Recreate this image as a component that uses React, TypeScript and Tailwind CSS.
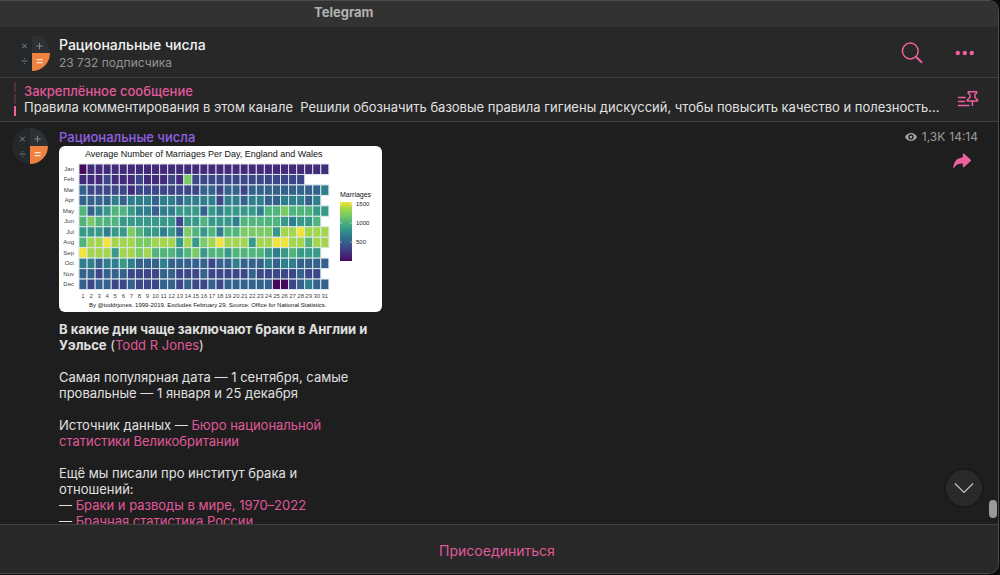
import React from 'react';

// Viridis steps, lowest to highest
const SCALE = ['#45085a', '#432a7a', '#3d4688', '#34628c', '#2f7e8c', '#379a88', '#4fb57b', '#7acb62', '#a3d64a', '#f2e438'];

// One digit per day, index into SCALE
const MONTHS = [
  { name: 'Jan', days: '0111111111111111111111111111111' },
  { name: 'Feb', days: '1112111211121722222222222222' },
  { name: 'Mar', days: '3222221222222223323323333333334' },
  { name: 'Apr', days: '333343444344344442443443344434' },
  { name: 'May', days: '6345665443445553545555466766655' },
  { name: 'Jun', days: '676665555555255655546666654556' },
  { name: 'Jul', days: '5554557655453765646677775889888' },
  { name: 'Aug', days: '6889888778885857898885889988688' },
  { name: 'Sep', days: '988858878666567566566665456555' },
  { name: 'Oct', days: '4434454333433333233433343443333' },
  { name: 'Nov', days: '332333222233222322222322222322' },
  { name: 'Dec', days: '3233223222332322323333330023433' },
];

const CELL_W = 8.06;
const CELL_H = 10.46;
const GRID_X = 20;
const GRID_Y = 18;

const LEGEND = [
  { label: '1500', y: 58 },
  { label: '1000', y: 77 },
  { label: '500', y: 96 },
];

const MarriagesChart: React.FC = () => (
  <svg viewBox="0 0 323 166" className="block w-full rounded-md bg-white" role="img" aria-label="Average Number of Marriages Per Day" fontFamily="'Liberation Sans', Arial, sans-serif">
    <defs>
      <linearGradient id="viridis" x1="0" y1="1" x2="0" y2="0">
        {SCALE.map((color, i) => (
          <stop key={color} offset={i / (SCALE.length - 1)} stopColor={color} />
        ))}
      </linearGradient>
    </defs>

    <text x="26" y="11" fontSize="9" fill="#111">Average Number of Marriages Per Day, England and Wales</text>

    {MONTHS.map((month, row) => (
      <g key={month.name}>
        <text x="15" y={GRID_Y + row * CELL_H + 7} fontSize="6" textAnchor="end" fill="#444">{month.name}</text>
        {month.days.split('').map((d, col) => (
          <rect
            key={col}
            x={GRID_X + col * CELL_W}
            y={GRID_Y + row * CELL_H}
            width={CELL_W}
            height={CELL_H}
            fill={SCALE[Number(d)]}
            stroke="#dbe6ea"
            strokeWidth="1"
          />
        ))}
      </g>
    ))}

    {Array.from({ length: 31 }, (_, i) => (
      <text key={i} x={GRID_X + (i + 0.5) * CELL_W} y="152" fontSize="6" textAnchor="middle" fill="#444">{i + 1}</text>
    ))}

    {/* LEGEND */}
    <text x="281" y="51" fontSize="7" fill="#111">Marriages</text>
    <rect x="281" y="56" width="12" height="59" fill="url(#viridis)" />
    {LEGEND.map(({ label, y }) => (
      <g key={label}>
        <path d={`M281 ${y}h2M291 ${y}h2`} stroke="#fff" strokeWidth="0.5" />
        <text x="297" y={y + 2} fontSize="6" fill="#222">{label}</text>
      </g>
    ))}

    <text x="30" y="161" fontSize="6" fill="#111">By @toddrjones. 1999-2019. Excludes February 29. Source: Office for National Statistics.</text>
  </svg>
);

const Avatar: React.FC = () => (
  <svg viewBox="0 0 36 36" className="block size-9 shrink-0" aria-hidden="true">
    <path d="M18 0A18 18 0 0 0 18 36Z" fill="#24282b" />
    <path d="M18 0A18 18 0 0 1 36 18H18Z" fill="#2d3134" />
    <path d="M18 18H36A18 18 0 0 1 18 36Z" fill="#f0823f" />
    <g stroke="#85888a" strokeWidth="1" fill="none">
      <path d="M8.2 8.7l4.6 4.6M12.8 8.7l-4.6 4.6" />
      <path d="M25.5 7.8v6.4M22.3 11h6.4" />
      <path d="M7.5 26h6" stroke="#6f7274" />
    </g>
    <circle cx="10.5" cy="23.6" r="0.7" fill="#6f7274" />
    <circle cx="10.5" cy="28.4" r="0.7" fill="#6f7274" />
    <path d="M22.6 24.6h6M22.6 27.6h6" stroke="#ffe6d4" strokeWidth="1.4" />
  </svg>
);

const SearchIcon: React.FC = () => (
  <svg viewBox="0 0 22 22" className="block size-[22px]" fill="none" stroke="#ee609f" strokeWidth="1.5" strokeLinecap="round">
    <circle cx="9.3" cy="9" r="7.9" />
    <path d="M15 14.8L20.6 20.2" strokeWidth="1.9" />
  </svg>
);

const PinListIcon: React.FC = () => (
  <svg viewBox="0 0 22 18" className="block h-[18px] w-[22px]" fill="none" stroke="#ee609f" strokeWidth="1.5" strokeLinecap="round" strokeLinejoin="round">
    <path d="M1.5 7.6h6.6M1.5 11.6h6M1.5 15.6h10.4" />
    <path d="M11.2 1.7h8.4v1.5l-1.7 1.3v3l2.6 2.2v1.4H10.3V9.7l2.6-2.2v-3l-1.7-1.3Z" />
    <path d="M15.4 11.4v4.2" />
  </svg>
);

const linkClass = 'text-[#e0589a]';

const App: React.FC = () => {
  return (
    <div className="h-screen bg-[#0c0c0c] pr-px pb-px font-['Inter','Noto_Sans',sans-serif] text-[#e0e0e0]">
      <div className="flex h-full flex-col overflow-hidden rounded-r-[10px] border-y border-r border-[#4b4b4b] bg-[#1e1e1e]">
        {/* TITLE BAR */}
        <div className="flex h-[26px] shrink-0 items-center bg-[#323232] pb-0.5 pl-[314px] text-[13px] font-bold text-[#b2b2b2]">
          Telegram
        </div>

        {/* CHAT HEADER */}
        <header className="flex h-[51px] shrink-0 items-center border-b border-[#414141] bg-[#282828] pt-0.5 pr-[23px] pl-3.5">
          <Avatar />
          <div className="ml-[9px] min-w-0 flex-1">
            <h1 className="truncate text-[14px] leading-[18px] font-medium text-[#f2f2f2]">Рациональные числа</h1>
            <p className="text-[12px] leading-[17px] text-[#949494]">23 732 подписчика</p>
          </div>
          <button type="button" aria-label="Поиск"><SearchIcon /></button>
          <button type="button" aria-label="Ещё" className="ml-8">
            <svg viewBox="0 0 20 6" className="block h-1.5 w-5" fill="#ee609f">
              <circle cx="2.8" cy="3" r="2.2" />
              <circle cx="9.8" cy="3" r="2.2" />
              <circle cx="16.8" cy="3" r="2.2" />
            </svg>
          </button>
        </header>

        {/* PINNED MESSAGE */}
        <section className="flex h-[44px] shrink-0 items-center border-b border-[#414141] bg-[#262626] pr-[19px] pb-px pl-3.5">
          <div className="flex flex-col gap-0.5">
            <span className="h-2.5 w-0.5 bg-[#54303f]" />
            <span className="h-2.5 w-0.5 bg-[#54303f]" />
            <span className="h-2.5 w-0.5 bg-[#f062a4]" />
          </div>
          <div className="ml-2 min-w-0 flex-1 text-[13px] leading-4">
            <p className="font-medium text-[#e0589a]">Закреплённое сообщение</p>
            <p className="truncate">
              Правила комментирования в этом канале{'\u00a0 '}Решили обозначить базовые правила гигиены дискуссий, чтобы повысить качество и полезность...
            </p>
          </div>
          <button type="button" aria-label="Закреплённые сообщения" className="ml-4"><PinListIcon /></button>
        </section>

        {/* MESSAGES */}
        <main className="relative min-h-0 flex-1 overflow-hidden">
          <article className="flex items-start pt-1.5 pr-5 pl-3">
            <Avatar />
            <div className="ml-[11px] w-[323px] shrink-0">
              <h2 className="pt-px text-[13px] leading-[17px] font-medium text-[#9160e6]">Рациональные числа</h2>
              <MarriagesChart />
              <div className="mt-[9px] text-[13px] leading-4">
                <p>
                  <b className="font-bold">В какие дни чаще заключают браки в Англии и<br />Уэльсе</b> (<a href="#todd" className={linkClass}>Todd R Jones</a>)
                </p>
                <p className="mt-4">Самая популярная дата — 1 сентября, самые<br />провальные — 1 января и 25 декабря</p>
                <p className="mt-4">
                  Источник данных — <a href="#ons" className={linkClass}>Бюро национальной<br />статистики Великобритании</a>
                </p>
                <p className="mt-4">
                  Ещё мы писали про институт брака и<br />отношений:<br />
                  — <a href="#world" className={linkClass}>Браки и разводы в мире, 1970–2022</a><br />
                  — <a href="#russia" className={linkClass}>Брачная статистика России</a>
                </p>
              </div>
            </div>
            <div className="ml-auto flex flex-col items-end">
              <div className="flex items-center text-[12px] leading-[18px] text-[#9b9b9b]">
                <svg viewBox="0 0 14 10" className="mr-1 block h-2.5 w-3.5">
                  <path d="M1 5C3.6-.2 10.4-.2 13 5C10.4 10.2 3.6 10.2 1 5Z" fill="#a6a6a6" />
                  <circle cx="7" cy="5" r="2.7" fill="#1e1e1e" />
                  <circle cx="7" cy="5" r="1.3" fill="#a6a6a6" />
                </svg>
                <span>1,3K</span>
                <time className="ml-1">14:14</time>
              </div>
              <button type="button" aria-label="Поделиться" className="mt-[7px] mr-1.5">
                <svg viewBox="0 0 20 16" className="block h-4 w-5" fill="#ee609f">
                  <path d="M10.8 1.3c0-.8.8-1.1 1.4-.6l6.6 6.1c.4.4.4.9 0 1.3l-6.6 6c-.6.5-1.4.2-1.4-.6V10.6C6.4 10.5 3.9 11.9 2.3 14.7c-.3.4-.9.3-.9-.3C1.6 8.600 4.900 4.800 10.800 4.400Z" />
                </svg>
              </button>
            </div>
          </article>

          <button
            type="button"
            aria-label="Вниз"
            className="absolute right-4 bottom-[18px] flex size-9 items-center justify-center rounded-full bg-[#2a2a2a] shadow-[0_0_3px_#111]"
          >
            <svg viewBox="0 0 20 12" className="block h-3 w-5" fill="none" stroke="#c4c4c4" strokeWidth="1.2">
              <path d="M1 1.500L10 10.500L19 1.500" />
            </svg>
          </button>
          <div className="absolute right-px bottom-1.5 h-[18px] w-2 rounded-full bg-[#9a9a9a]" />
        </main>

        {/* JOIN */}
        <footer className="h-[49px] shrink-0 border-t border-[#414141] bg-[#282828]">
          <button type="button" className="h-full w-full pt-0.5 pr-1 text-[14px] text-[#e0589a]">Присоединиться</button>
        </footer>
      </div>
    </div>
  );
};

export default App;
